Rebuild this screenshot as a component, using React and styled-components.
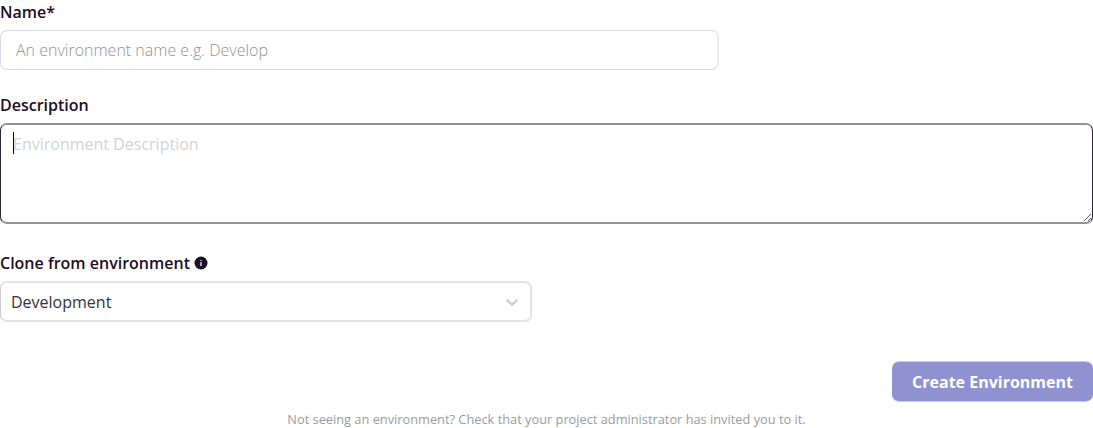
import React from 'react';
import styled, { createGlobalStyle } from 'styled-components';

const Global = createGlobalStyle`
  *, *::before, *::after { box-sizing: border-box; }
  body { margin: 0; background: #fff; font-family: "Open Sans", sans-serif; color: #1e0d26; overflow: hidden; }
`;

const Form = styled.form`
  display: flex;
  flex-direction: column;
  width: 1093px;
  height: 428px;
  overflow: hidden;
`;

const Field = styled.div`
  display: flex;
  flex-direction: column;
  align-items: flex-start;
  width: ${(p) => p.$width};
  margin-bottom: ${(p) => p.$gap};
`;

const Label = styled.label`
  display: flex;
  align-items: center;
  gap: 4px;
  height: 24px;
  margin-bottom: 6px;
  font-size: 16px;
  font-weight: 600;
  line-height: 24px;
`;

const Input = styled.input`
  width: 100%;
  height: 40px;
  padding: 0 15px;
  border: 1px solid #dad8e8;
  border-right: 2px solid #ecebf4;
  border-radius: 7px;
  outline: none;
  font: 400 16px/24px "Open Sans", sans-serif;
  &::placeholder { color: #939393; font-weight: 300; opacity: 1; }
`;

const TextBox = styled.div`
  display: flex;
  position: relative;
  width: 100%;
  height: 101px;
  padding: 7px 12px;
  border: 1px solid #2b2636;
  border-top: 2px solid #95929a;
  border-bottom: 2px solid #95929a;
  border-radius: 7px;
  font-size: 16px;
  line-height: 24px;
  color: #d3d3d3;
`;

const Caret = styled.span`
  width: 1px;
  height: 22px;
  margin-right: -1px;
  background: #000;
`;

const Grip = styled.svg`
  position: absolute;
  right: 0;
  bottom: 0;
`;

const Select = styled.div`
  display: flex;
  align-items: center;
  justify-content: space-between;
  width: 100%;
  height: 41px;
  padding: 0 8px 0 10px;
  border: 2px solid #e3e3e3;
  border-left: 1px solid #ccc;
  border-radius: 7px;
  font-size: 16px;
  color: #333;
`;

const Actions = styled.div`
  display: flex;
  justify-content: flex-end;
`;

const Submit = styled.button`
  width: 201px;
  height: 41px;
  padding: 0;
  border: 0 solid rgba(143, 145, 209, 0.5);
  border-width: 1px 0;
  border-radius: 7px;
  background: #8f91d1;
  background-clip: padding-box;
  color: #fff;
  font: 700 16px/24px "Open Sans", sans-serif;
`;

const Hint = styled.p`
  margin: 8px 0 0;
  text-align: center;
  font-size: 12.8px;
  line-height: 18px;
  color: #979da3;
`;

export default function App() {
  return (
    <>
      <Global />
      <Form>
        <Field $width="719px" $gap="23px">
          <Label>Name*</Label>
          <Input placeholder="An environment name e.g. Develop" />
        </Field>
        <Field $width="100%" $gap="27px">
          <Label>Description</Label>
          <TextBox>
            <Caret />
            Environment Description
            <Grip width="9" height="9" viewBox="0 0 9 9" stroke="#555" fill="none">
              <path d="M1 8 8 1M5 8 8 5" />
            </Grip>
          </TextBox>
        </Field>
        <Field $width="532px" $gap="39px">
          <Label>
            Clone from environment
            <svg width="14" height="14" viewBox="0 0 14 14">
              <circle cx="7" cy="7" r="6.5" fill="#1e0d26" />
              <path d="M7 6v4M7 4v1" stroke="#fff" strokeWidth="1.2" fill="none" />
            </svg>
          </Label>
          <Select>
            Development
            <svg width="20" height="20" viewBox="0 0 20 20" fill="#ccc">
              <path d="M4.516 7.548c0.436-0.446 1.043-0.481 1.576 0l3.908 3.747 3.908-3.747c0.533-0.481 1.141-0.446 1.574 0 0.436 0.445 0.408 1.197 0 1.615-0.406 0.418-4.695 4.502-4.695 4.502-0.217 0.223-0.502 0.335-0.787 0.335s-0.57-0.112-0.789-0.335c0 0-4.287-4.084-4.695-4.502s-0.436-1.17 0-1.615z" />
            </svg>
          </Select>
        </Field>
        <Actions>
          <Submit type="button">Create Environment</Submit>
        </Actions>
        <Hint>Not seeing an environment? Check that your project administrator has invited you to it.</Hint>
      </Form>
    </>
  );
}
